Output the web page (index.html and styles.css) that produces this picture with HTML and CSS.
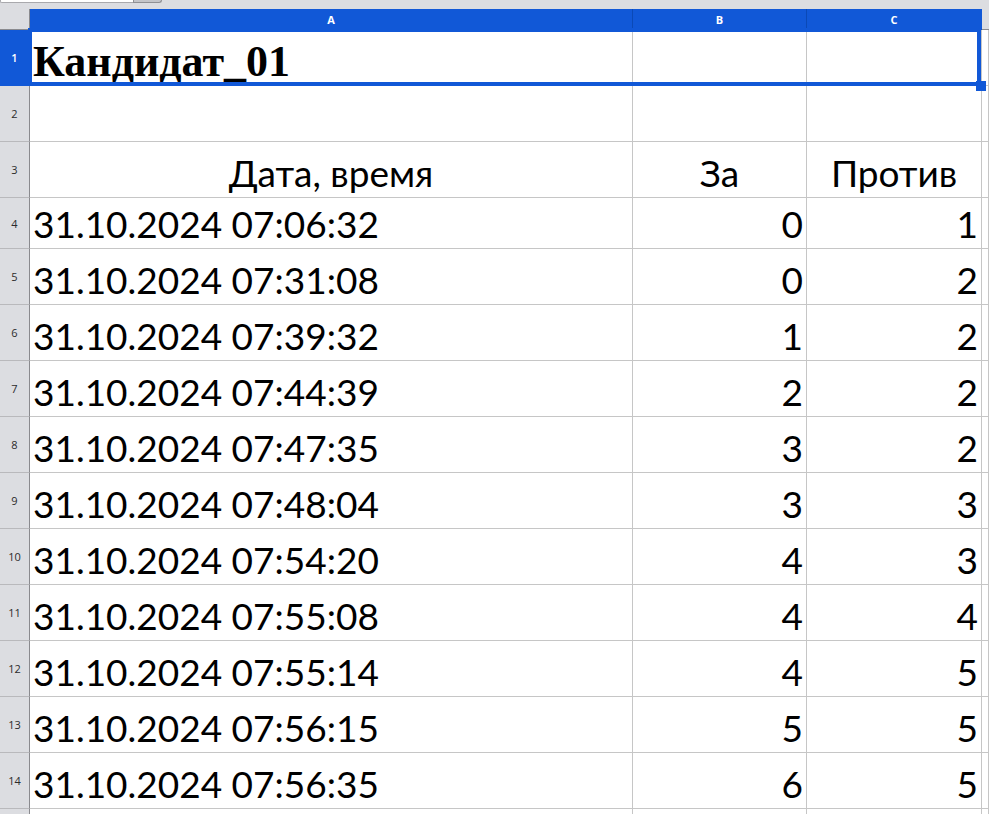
FILE: index.html
```html
<!DOCTYPE html>
<html lang="ru">
<head>
<meta charset="utf-8">
<title>Кандидат_01</title>
<link rel="stylesheet" href="styles.css">
</head>
<body>
<div class="app">
  <div class="topbar">
    <div class="hscroll"><div class="track"></div><div class="thumb"></div></div>
  </div>
  <div class="sheet">
    <div class="corner"></div>
    <div class="colhead sel">A</div>
    <div class="colhead sel">B</div>
    <div class="colhead sel last">C</div>
    <div class="colhead rest"></div>

    <div class="rowhead selrow r1">1</div>
    <div class="cell title">Кандидат_01</div>
    <div class="cell"></div>
    <div class="cell"></div>
    <div class="cell"></div>

    <div class="rowhead">2</div>
    <div class="cell"></div><div class="cell"></div><div class="cell"></div><div class="cell"></div>

    <div class="rowhead">3</div>
    <div class="cell center">Дата, время</div>
    <div class="cell center">За</div>
    <div class="cell center">Против</div>
    <div class="cell"></div>

    <div class="rowhead">4</div>
    <div class="cell">31.10.2024 07:06:32</div><div class="cell num">0</div><div class="cell num">1</div><div class="cell"></div>

    <div class="rowhead">5</div>
    <div class="cell">31.10.2024 07:31:08</div><div class="cell num">0</div><div class="cell num">2</div><div class="cell"></div>

    <div class="rowhead">6</div>
    <div class="cell">31.10.2024 07:39:32</div><div class="cell num">1</div><div class="cell num">2</div><div class="cell"></div>

    <div class="rowhead">7</div>
    <div class="cell">31.10.2024 07:44:39</div><div class="cell num">2</div><div class="cell num">2</div><div class="cell"></div>

    <div class="rowhead">8</div>
    <div class="cell">31.10.2024 07:47:35</div><div class="cell num">3</div><div class="cell num">2</div><div class="cell"></div>

    <div class="rowhead">9</div>
    <div class="cell">31.10.2024 07:48:04</div><div class="cell num">3</div><div class="cell num">3</div><div class="cell"></div>

    <div class="rowhead">10</div>
    <div class="cell">31.10.2024 07:54:20</div><div class="cell num">4</div><div class="cell num">3</div><div class="cell"></div>

    <div class="rowhead">11</div>
    <div class="cell">31.10.2024 07:55:08</div><div class="cell num">4</div><div class="cell num">4</div><div class="cell"></div>

    <div class="rowhead">12</div>
    <div class="cell">31.10.2024 07:55:14</div><div class="cell num">4</div><div class="cell num">5</div><div class="cell"></div>

    <div class="rowhead">13</div>
    <div class="cell">31.10.2024 07:56:15</div><div class="cell num">5</div><div class="cell num">5</div><div class="cell"></div>

    <div class="rowhead">14</div>
    <div class="cell">31.10.2024 07:56:35</div><div class="cell num">6</div><div class="cell num">5</div><div class="cell"></div>

    <div class="rowhead"></div>
    <div class="cell"></div><div class="cell"></div><div class="cell"></div><div class="cell"></div>

    <div class="selection"><div class="handle"></div></div>
  </div>
</div>
</body>
</html>
```

FILE: styles.css
```css
html, body {
  margin: 0;
  padding: 0;
  background: #ffffff;
  overflow: hidden;
}

.app {
  width: 989px;
  height: 814px;
  overflow: hidden;
  background: #ffffff;
  font-family: Lato, "Noto Sans", sans-serif;
}

.topbar {
  height: 9px;
  background: #dcdde1;
  display: flex;
  align-items: flex-start;
}

.hscroll {
  display: flex;
  width: 162px;
  height: 3px;
}

.track {
  flex: 1;
  background: #ffffff;
  border: 1px solid #a9a9ad;
  border-top: none;
  border-right: none;
  border-bottom-left-radius: 2px;
}

.thumb {
  width: 27px;
  background: #c4c5c9;
  border: 1px solid #8f9094;
  border-top: none;
  border-bottom-right-radius: 3px;
}

.sheet {
  position: relative;
  display: grid;
  grid-template-columns: 30px 603px 174px 175px 1fr;
  grid-template-rows: 21px 56px 56px 56px 51px repeat(10, 56px) 56px;
}

.corner {
  background: #dcdde1;
  border-right: 1px solid #8a8a8e;
  border-bottom: 1px solid #8a8a8e;
}

.colhead {
  display: flex;
  align-items: center;
  justify-content: center;
  font-family: "Open Sans", sans-serif;
  font-size: 11px;
  font-weight: 700;
  color: #ffffff;
  background: #1158d7;
  border-right: 1px solid #0b49b6;
  border-bottom: 1px solid #0b49b6;
  padding-top: 1px;
}

.colhead.last {
  border-right-color: #1158d7;
}

.colhead.rest {
  background: #dcdde1;
  border-right: none;
  border-bottom: 1px solid #8a8a8e;
}

.rowhead {
  display: flex;
  align-items: center;
  justify-content: center;
  font-family: "Open Sans", sans-serif;
  font-size: 11px;
  color: #2b2b2b;
  background: #dcdde1;
  border-right: 1px solid #8a8a8e;
  border-bottom: 1px solid #b9b9bc;
}

.rowhead.selrow {
  background: #1158d7;
  color: #ffffff;
  font-weight: 600;
  border-bottom-color: #1158d7;
}

.cell {
  display: flex;
  align-items: flex-end;
  min-width: 0;
  overflow: hidden;
  white-space: nowrap;
  padding: 0 3px 2px 3px;
  font-size: 37px;
  line-height: 1.2;
  color: #000000;
  border-right: 1px solid #c6c6c6;
  border-bottom: 1px solid #c6c6c6;
}

.cell.center {
  justify-content: center;
}

.cell.num {
  justify-content: flex-end;
}

.cell.title {
  font-family: "Liberation Serif", serif;
  font-weight: 700;
  font-size: 44px;
  line-height: 1;
  padding-bottom: 1px;
}

.selection {
  position: absolute;
  left: 28px;
  top: 19px;
  width: 945px;
  height: 50px;
  border: 4px solid #1158d7;
  pointer-events: none;
}

.handle {
  position: absolute;
  right: -9px;
  bottom: -9px;
  width: 10px;
  height: 10px;
  background: #1158d7;
}
```
